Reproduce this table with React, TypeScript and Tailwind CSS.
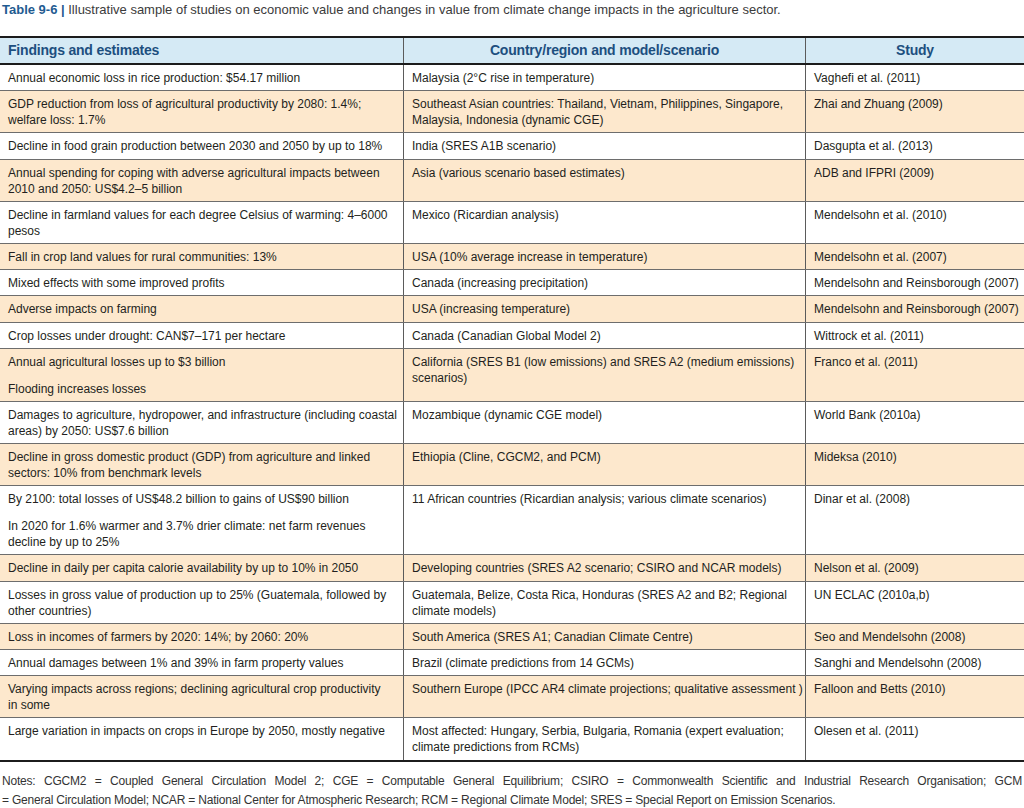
type Row = {
  findings: string[][];
  region: string[];
  study: string;
};

// each finding is a paragraph, each paragraph a list of lines
const rows: Row[] = [
  {
    findings: [["Annual economic loss in rice production: $54.17 million"]],
    region: ["Malaysia (2°C rise in temperature)"],
    study: "Vaghefi et al. (2011)",
  },
  {
    findings: [["GDP reduction from loss of agricultural productivity by 2080: 1.4%;", "welfare loss: 1.7%"]],
    region: ["Southeast Asian countries: Thailand, Vietnam, Philippines, Singapore,", "Malaysia, Indonesia (dynamic CGE)"],
    study: "Zhai and Zhuang (2009)",
  },
  {
    findings: [["Decline in food grain production between 2030 and 2050 by up to 18%"]],
    region: ["India (SRES A1B scenario)"],
    study: "Dasgupta et al. (2013)",
  },
  {
    findings: [["Annual spending for coping with adverse agricultural impacts between", "2010 and 2050: US$4.2–5 billion"]],
    region: ["Asia (various scenario based estimates)"],
    study: "ADB and IFPRI (2009)",
  },
  {
    findings: [["Decline in farmland values for each degree Celsius of warming: 4–6000", "pesos"]],
    region: ["Mexico (Ricardian analysis)"],
    study: "Mendelsohn et al. (2010)",
  },
  {
    findings: [["Fall in crop land values for rural communities: 13%"]],
    region: ["USA (10% average increase in temperature)"],
    study: "Mendelsohn et al. (2007)",
  },
  {
    findings: [["Mixed effects with some improved profits"]],
    region: ["Canada (increasing precipitation)"],
    study: "Mendelsohn and Reinsborough (2007)",
  },
  {
    findings: [["Adverse impacts on farming"]],
    region: ["USA (increasing temperature)"],
    study: "Mendelsohn and Reinsborough (2007)",
  },
  {
    findings: [["Crop losses under drought: CAN$7–171 per hectare"]],
    region: ["Canada (Canadian Global Model 2)"],
    study: "Wittrock et al. (2011)",
  },
  {
    findings: [["Annual agricultural losses up to $3 billion"], ["Flooding increases losses"]],
    region: ["California (SRES B1 (low emissions) and SRES A2 (medium emissions)", "scenarios)"],
    study: "Franco et al. (2011)",
  },
  {
    findings: [["Damages to agriculture, hydropower, and infrastructure (including coastal", "areas) by 2050: US$7.6 billion"]],
    region: ["Mozambique (dynamic CGE model)"],
    study: "World Bank (2010a)",
  },
  {
    findings: [["Decline in gross domestic product (GDP) from agriculture and linked", "sectors: 10% from benchmark levels"]],
    region: ["Ethiopia (Cline, CGCM2, and PCM)"],
    study: "Mideksa (2010)",
  },
  {
    findings: [
      ["By 2100: total losses of US$48.2 billion to gains of US$90 billion"],
      ["In 2020 for 1.6% warmer and 3.7% drier climate: net farm revenues", "decline by up to 25%"],
    ],
    region: ["11 African countries (Ricardian analysis; various climate scenarios)"],
    study: "Dinar et al. (2008)",
  },
  {
    findings: [["Decline in daily per capita calorie availability by up to 10% in 2050"]],
    region: ["Developing countries (SRES A2 scenario; CSIRO and NCAR models)"],
    study: "Nelson et al. (2009)",
  },
  {
    findings: [["Losses in gross value of production up to 25% (Guatemala, followed by", "other countries)"]],
    region: ["Guatemala, Belize, Costa Rica, Honduras (SRES A2 and B2; Regional", "climate models)"],
    study: "UN ECLAC (2010a,b)",
  },
  {
    findings: [["Loss in incomes of farmers by 2020: 14%; by 2060: 20%"]],
    region: ["South America (SRES A1; Canadian Climate Centre)"],
    study: "Seo and Mendelsohn (2008)",
  },
  {
    findings: [["Annual damages between 1% and 39% in farm property values"]],
    region: ["Brazil (climate predictions from 14 GCMs)"],
    study: "Sanghi and Mendelsohn (2008)",
  },
  {
    findings: [["Varying impacts across regions; declining agricultural crop productivity", "in some"]],
    region: ["Southern Europe (IPCC AR4 climate projections; qualitative assessment )"],
    study: "Falloon and Betts (2010)",
  },
  {
    findings: [["Large variation in impacts on crops in Europe by 2050, mostly negative"]],
    region: ["Most affected: Hungary, Serbia, Bulgaria, Romania (expert evaluation;", "climate predictions from RCMs)"],
    study: "Olesen et al. (2011)",
  },
];

const Lines = ({ lines }: { lines: string[] }) => (
  <p className="whitespace-nowrap">
    {lines.map((line, i) => (
      <span key={i} className="block">
        {line}
      </span>
    ))}
  </p>
);

export default function App() {
  return (
    <div className="w-[1024px] h-[808px] overflow-hidden bg-white font-['Liberation_Sans',Arial,sans-serif] text-[#231f20]">
      <p className="pl-[2px] pt-[1px] text-[13px] leading-[17px] text-[#3b3b3b] whitespace-nowrap">
        <span className="font-bold text-[#1f5b91]">Table 9-6 |</span> Illustrative sample of studies on
        economic value and changes in value from climate change impacts in the agriculture sector.
      </p>

      <div className="mt-[18px] border-y-2 border-[#1c1c1c]">
        <div className="grid grid-cols-[404px_402px_1fr] bg-[#d5eaf5] border-b-2 border-[#1c1c1c] text-[14px] leading-[17px] font-bold tracking-[-0.2px] text-[#1d4f7f]">
          <div className="px-[8px] py-[4px] border-r border-[#5b5b5b]">Findings and estimates</div>
          <div className="px-[8px] py-[4px] border-r border-[#5b5b5b] text-center">
            Country/region and model/scenario
          </div>
          <div className="px-[8px] py-[4px] text-center">Study</div>
        </div>

        {rows.map((row, i) => (
          <div
            key={i}
            className={`grid grid-cols-[404px_402px_1fr] text-[12px] leading-[16px] ${
              i % 2 === 1 ? "bg-[#fde8cd]" : "bg-white"
            } ${i < rows.length - 1 ? "border-b border-[#6d6d6d]" : ""}`}
          >
            <div className="flex flex-col gap-[11px] px-[8px] pt-[5px] pb-[4.2px] border-r border-[#5b5b5b]">
              {row.findings.map((para, j) => (
                <Lines key={j} lines={para} />
              ))}
            </div>
            <div className="px-[8px] pt-[5px] pb-[4.2px] border-r border-[#5b5b5b]">
              <Lines lines={row.region} />
            </div>
            <div className="px-[8px] pt-[5px] pb-[4.2px] whitespace-nowrap">{row.study}</div>
          </div>
        ))}
      </div>

      <div className="mt-[10px] px-[2px] text-[12px] leading-[19px] tracking-[-0.2px] text-[#333333]">
        <p className="text-justify [text-align-last:justify]">
          Notes: CGCM2 = Coupled General Circulation Model 2; CGE = Computable General Equilibrium; CSIRO =
          Commonwealth Scientific and Industrial Research Organisation; GCM
        </p>
        <p className="whitespace-nowrap">
          = General Circulation Model; NCAR = National Center for Atmospheric Research; RCM = Regional Climate
          Model; SRES = Special Report on Emission Scenarios.
        </p>
      </div>
    </div>
  );
}
